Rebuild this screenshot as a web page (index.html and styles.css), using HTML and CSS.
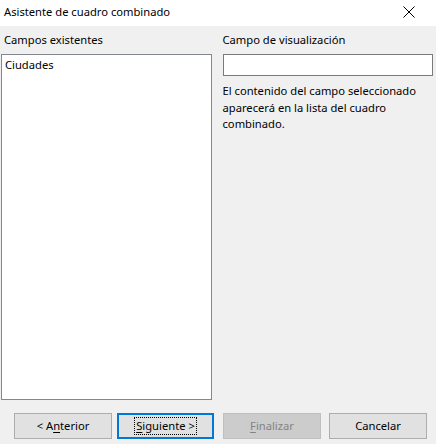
FILE: index.html
```html
<!DOCTYPE html>
<html lang="es">
<head>
<meta charset="utf-8">
<title>Asistente de cuadro combinado</title>
<link rel="stylesheet" href="styles.css">
</head>
<body>
<div class="dialog">
  <div class="titlebar">
    <span class="title">Asistente de cuadro combinado</span>
    <svg class="close" width="12" height="12" viewBox="0 0 12 12"><path d="M0.5 0.5 L11.5 11.5 M11.5 0.5 L0.5 11.5" stroke="#000" stroke-width="1" fill="none"/></svg>
  </div>
  <div class="content">
    <div class="columns">
      <div class="col-left">
        <div class="label">Campos existentes</div>
        <div class="listbox"><div class="item">Ciudades</div></div>
      </div>
      <div class="col-right">
        <div class="label">Campo de visualización</div>
        <div class="textfield"></div>
        <p class="desc">El contenido del campo seleccionado aparecerá en la lista del cuadro combinado.</p>
      </div>
    </div>
    <div class="buttons">
      <div class="btn btn-prev">&lt; A<u>n</u>terior</div>
      <div class="btn btn-default"><span class="focus"><u>S</u>iguiente &gt;</span></div>
      <div class="btn btn-disabled"><u>F</u>inalizar</div>
      <div class="btn btn-cancel">Cancelar</div>
    </div>
  </div>
</div>
</body>
</html>
```
FILE: styles.css
```css
html, body {
  margin: 0;
  padding: 0;
  background: #f0f0f0;
}
.dialog {
  width: 436px;
  height: 444px;
  font-family: "Noto Sans", "Open Sans", sans-serif;
  font-size: 11.2px;
  color: #000;
  background: #f0f0f0;
  overflow: hidden;
}
.titlebar {
  height: 26px;
  background: #fff;
  display: flex;
  align-items: center;
  justify-content: space-between;
  padding: 0 21px 0 4px;
}
.title {
  line-height: 16px;
  margin-top: -3px;
}
.close {
  display: block;
  margin-top: -3px;
}
.content {
  padding: 6px 3px 0 1px;
}
.columns {
  display: flex;
  gap: 11px;
}
.col-left {
  width: 211px;
}
.col-right {
  width: 211px;
}
.label {
  line-height: 16px;
  height: 16px;
  margin-bottom: 6px;
  padding-left: 3px;
}
.col-right .label {
  padding-left: 0;
}
.listbox {
  height: 344px;
  background: #fff;
  border: 1px solid #828790;
  box-sizing: content-box;
}
.item {
  line-height: 16px;
  padding: 2px 3px;
}
.textfield {
  height: 20px;
  background: #fff;
  border: 1px solid #7a7a7a;
}
.desc {
  margin: 7px 0 0 0;
  line-height: 16.5px;
  padding-right: 4px;
}
.buttons {
  display: flex;
  margin-top: 13px;
  padding-left: 13px;
}
.btn {
  box-sizing: border-box;
  height: 26px;
  width: 98px;
  background: #e1e1e1;
  border: 1px solid #adadad;
  display: flex;
  align-items: center;
  justify-content: center;
  line-height: 16px;
}
.btn-default {
  border: 2px solid #0078d7;
  width: 97px;
  margin-left: 5px;
}
.focus {
  outline: 1px dotted #000;
  outline-offset: 0px;
  padding: 0 1px;
}
.btn-disabled {
  margin-left: 9px;
  background: #cccccc;
  border-color: #bfbfbf;
  color: #838383;
}
.btn-cancel {
  margin-left: 8px;
}
u {
  text-decoration: underline;
  text-underline-offset: 2px;
}
```
